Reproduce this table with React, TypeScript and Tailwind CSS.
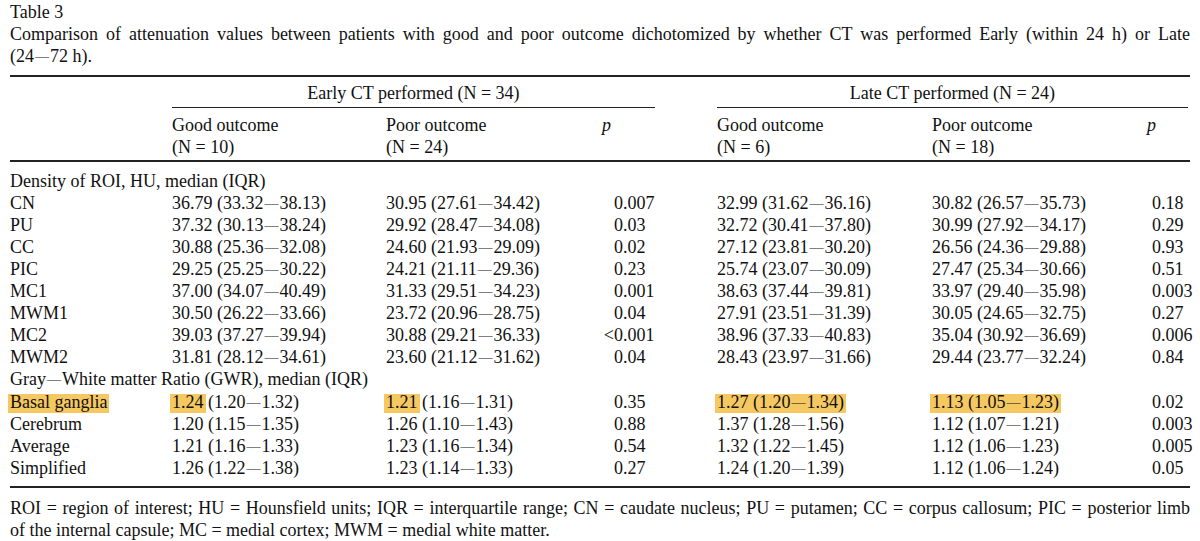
const rows: [string, string, string, string, string, string, string][] = [
  ["CN", "36.79 (33.32−38.13)", "30.95 (27.61−34.42)", "0.007", "32.99 (31.62−36.16)", "30.82 (26.57−35.73)", "0.18"],
  ["PU", "37.32 (30.13−38.24)", "29.92 (28.47−34.08)", "0.03", "32.72 (30.41−37.80)", "30.99 (27.92−34.17)", "0.29"],
  ["CC", "30.88 (25.36−32.08)", "24.60 (21.93−29.09)", "0.02", "27.12 (23.81−30.20)", "26.56 (24.36−29.88)", "0.93"],
  ["PIC", "29.25 (25.25−30.22)", "24.21 (21.11−29.36)", "0.23", "25.74 (23.07−30.09)", "27.47 (25.34−30.66)", "0.51"],
  ["MC1", "37.00 (34.07−40.49)", "31.33 (29.51−34.23)", "0.001", "38.63 (37.44−39.81)", "33.97 (29.40−35.98)", "0.003"],
  ["MWM1", "30.50 (26.22−33.66)", "23.72 (20.96−28.75)", "0.04", "27.91 (23.51−31.39)", "30.05 (24.65−32.75)", "0.27"],
  ["MC2", "39.03 (37.27−39.94)", "30.88 (29.21−36.33)", "<0.001", "38.96 (37.33−40.83)", "35.04 (30.92−36.69)", "0.006"],
  ["MWM2", "31.81 (28.12−34.61)", "23.60 (21.12−31.62)", "0.04", "28.43 (23.97−31.66)", "29.44 (23.77−32.24)", "0.84"],
];

const gwr: [string, string, string, string, string, string, string][] = [
  ["Cerebrum", "1.20 (1.15−1.35)", "1.26 (1.10−1.43)", "0.88", "1.37 (1.28−1.56)", "1.12 (1.07−1.21)", "0.003"],
  ["Average", "1.21 (1.16−1.33)", "1.23 (1.16−1.34)", "0.54", "1.32 (1.22−1.45)", "1.12 (1.06−1.23)", "0.005"],
  ["Simplified", "1.26 (1.22−1.38)", "1.23 (1.14−1.33)", "0.27", "1.24 (1.20−1.39)", "1.12 (1.06−1.24)", "0.05"],
];

const grid = "grid grid-cols-[162px_214px_204px_127px_215px_215px_43px]";

// the typeset minus in the source is long, wider than the font's own glyph
function Dash() {
  return <span className="relative -top-[1px] mx-[1px] text-[0.78em] leading-none">—</span>;
}

function fmt(s: string) {
  const parts = s.split("−");
  return parts.map((p, i) => (
    <span key={i}>
      {i > 0 && <Dash />}
      {p}
    </span>
  ));
}

function PVal({ v, late }: { v: string; late?: boolean }) {
  const [a, b] = v.split(".");
  return (
    <div className="whitespace-nowrap">
      <span className={late ? "inline-block w-[14px] text-right" : "inline-block w-[33px] text-right"}>{a}</span>
      <span>.{b}</span>
    </div>
  );
}

function Mark({ children }: { children: React.ReactNode }) {
  return (
    <span className="-mx-[2px] inline-block bg-[#f6c862] px-[2px] pb-[3px] leading-[16px]">{children}</span>
  );
}

function Row({ r }: { r: [string, string, string, string, string, string, string] }) {
  return (
    <div className={grid}>
      <div>{r[0]}</div>
      <div>{fmt(r[1])}</div>
      <div>{fmt(r[2])}</div>
      <PVal v={r[3]} />
      <div>{fmt(r[4])}</div>
      <div>{fmt(r[5])}</div>
      <PVal v={r[6]} late />
    </div>
  );
}

export default function App() {
  return (
    <div
      className="h-[541px] w-[1200px] overflow-hidden bg-white px-[10px] pt-[1px] text-[18px] leading-[22px] text-[#111]"
      style={{ fontFamily: '"Liberation Serif", "Times New Roman", serif' }}
    >
      <div>Table 3</div>
      <div className="text-justify [text-align-last:justify]">
        Comparison of attenuation values between patients with good and poor outcome dichotomized by whether CT was
        performed Early (within 24 h) or Late
      </div>
      <div>{fmt("(24−72 h).")}</div>

      <div className="mt-[8px] border-t-2 border-[#222] pt-[5px]">
        <div className={grid}>
          <div />
          <div className="col-span-3">
            <div className="w-[483px] border-b border-[#222] pb-[3px] text-center">Early CT performed (N = 34)</div>
          </div>
          <div className="col-span-3">
            <div className="w-[471px] border-b border-[#222] pb-[3px] text-center">Late CT performed (N = 24)</div>
          </div>
        </div>
        <div className={`${grid} pt-[6px] pb-[2px]`}>
          <div />
          <div>
            Good outcome
            <br />
            (N = 10)
          </div>
          <div>
            Poor outcome
            <br />
            (N = 24)
          </div>
          <div className="pl-[12px] italic">p</div>
          <div>
            Good outcome
            <br />
            (N = 6)
          </div>
          <div>
            Poor outcome
            <br />
            (N = 18)
          </div>
          <div className="italic">p</div>
        </div>
      </div>

      <div className="border-t-2 border-[#222] pt-[8px] pb-[7px]">
        <div>Density of ROI, HU, median (IQR)</div>
        {rows.map((r) => (
          <Row key={r[0]} r={r} />
        ))}
        <div>{fmt("Gray−White matter Ratio (GWR), median (IQR)")}</div>
        <div className={`${grid} pt-[1px]`}>
          <div>
            <Mark>Basal ganglia</Mark>
          </div>
          <div>
            <Mark>1.24</Mark> {fmt("(1.20−1.32)")}
          </div>
          <div>
            <Mark>1.21</Mark> {fmt("(1.16−1.31)")}
          </div>
          <PVal v="0.35" />
          <div>
            <Mark>{fmt("1.27 (1.20−1.34)")}</Mark>
          </div>
          <div>
            <Mark>{fmt("1.13 (1.05−1.23)")}</Mark>
          </div>
          <PVal v="0.02" late />
        </div>
        {gwr.map((r) => (
          <Row key={r[0]} r={r} />
        ))}
      </div>

      <div className="border-t-2 border-[#222] pt-[9px]">
        <div className="text-justify [text-align-last:justify]">
          ROI = region of interest; HU = Hounsfield units; IQR = interquartile range; CN = caudate nucleus; PU =
          putamen; CC = corpus callosum; PIC = posterior limb
        </div>
        <div>of the internal capsule; MC = medial cortex; MWM = medial white matter.</div>
      </div>
    </div>
  );
}
